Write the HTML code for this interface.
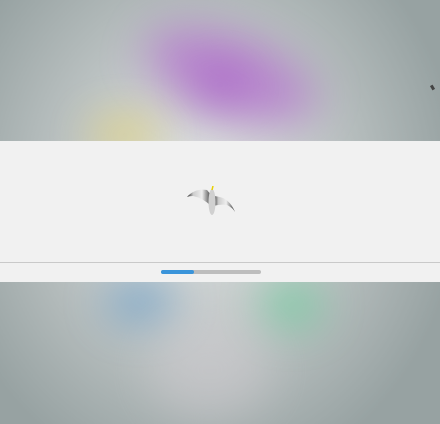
<!DOCTYPE html>
<html><head><style>
html,body{margin:0;padding:0}
body{width:440px;height:424px;overflow:hidden;position:relative;background:radial-gradient(ellipse 260px 300px at 200px 190px,#e2e4e4 0%,#c2c8c8 45%,#97a2a2 100%);}
.b{position:absolute;border-radius:50%;filter:blur(22px)}
.panel{position:absolute;left:0;top:141px;width:440px;height:141px;background:#f1f1f1}
.line{position:absolute;left:0;top:262px;width:440px;height:1px;background:#c9c9c9}
.bar{position:absolute;left:161px;top:270px;width:100px;height:4px;background:#bdbdbd;border-radius:2px}
.fill{width:33px;height:4px;background:#3a94da;border-radius:2px}
</style></head><body>
<div class="b" style="left:140px;top:35px;width:180px;height:80px;background:#b160d0;opacity:.6;transform:rotate(20deg)"></div>
<div class="b" style="left:190px;top:65px;width:60px;height:40px;background:#9a3cc0;opacity:.45"></div>
<div class="b" style="left:90px;top:120px;width:70px;height:30px;background:#f0d650;opacity:.7"></div>
<div class="b" style="left:105px;top:282px;width:70px;height:40px;background:#4a8fc8;opacity:.6"></div>
<div class="b" style="left:262px;top:282px;width:60px;height:45px;background:#4ed08e;opacity:.6"></div>
<div class="b" style="left:150px;top:320px;width:120px;height:100px;background:#d8d0d6;opacity:.4"></div>
<div class="panel"></div>
<div class="line"></div>
<div class="bar"><div class="fill"></div></div>
<svg style="position:absolute;left:185px;top:186px" width="52" height="32" viewBox="0 0 52 32">
<defs><linearGradient id="w" x1="0" x2="1"><stop offset="0" stop-color="#222"/><stop offset=".25" stop-color="#ccc"/><stop offset=".6" stop-color="#eee"/><stop offset="1" stop-color="#333"/></linearGradient></defs>
<path d="M2 11 Q10 2 22 4 L27 10 L26 20 Q18 12 8 10 Q4 10 2 11Z" fill="url(#w)"/>
<path d="M50 26 Q46 16 38 12 Q32 10 28 10 L28 20 Q36 18 42 19 Q48 22 50 26Z" fill="url(#w)"/>
<ellipse cx="27" cy="16" rx="3.5" ry="13" fill="#d0d0d0"/>
<path d="M27 4 L28 0" stroke="#e8d000" stroke-width="1.5"/>
</svg>
<div style="position:absolute;left:431px;top:85px;width:3px;height:5px;background:#444;transform:rotate(-30deg)"></div>
</body></html>
